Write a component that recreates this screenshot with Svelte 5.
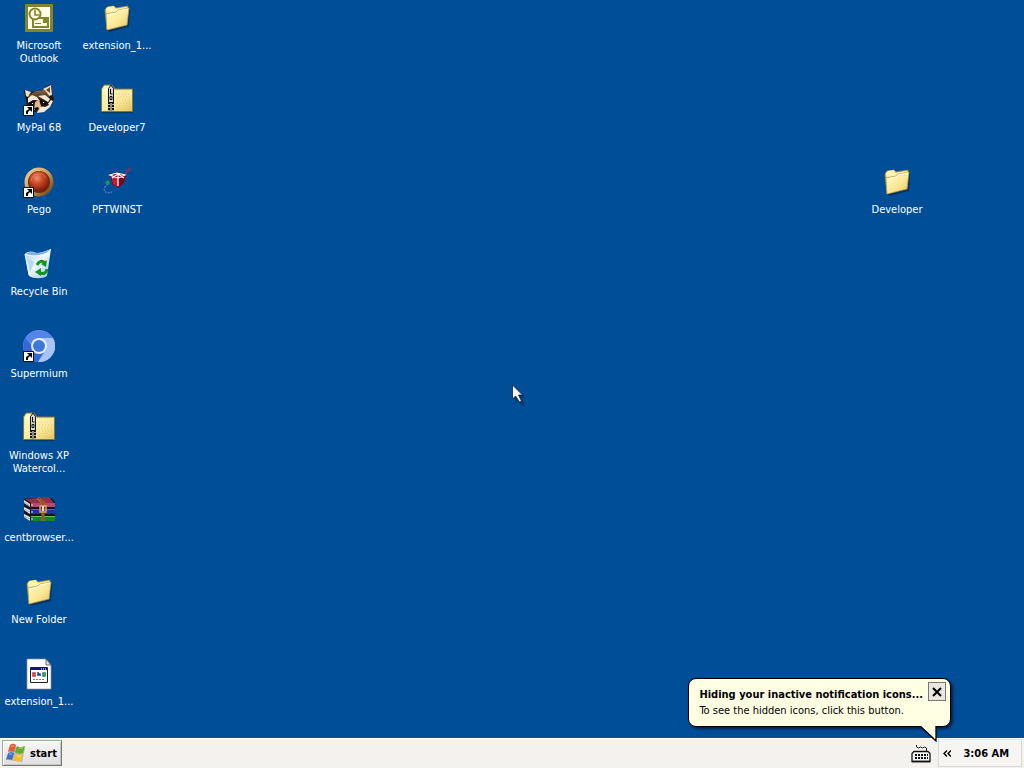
<script>
  const shortcuts = [
    { name: 'Microsoft Outlook', icon: 'outlook', col: 1, row: 1 },
    { name: 'MyPal 68', icon: 'raccoon', col: 1, row: 2, link: true },
    { name: 'Pego', icon: 'pego', col: 1, row: 3, link: true },
    { name: 'Recycle Bin', icon: 'bin', col: 1, row: 4 },
    { name: 'Supermium', icon: 'chromium', col: 1, row: 5, link: true },
    { name: 'Windows XP Watercol...', icon: 'zip', col: 1, row: 6 },
    { name: 'centbrowser...', icon: 'rar', col: 1, row: 7 },
    { name: 'New Folder', icon: 'folder', col: 1, row: 8 },
    { name: 'extension_1...', icon: 'file', col: 1, row: 9 },
    { name: 'extension_1...', icon: 'folder', col: 2, row: 1 },
    { name: 'Developer7', icon: 'zip', col: 2, row: 2 },
    { name: 'PFTWINST', icon: 'installer', col: 2, row: 3 },
    { name: 'Developer', icon: 'folder', col: 12, row: 3 }
  ];
  let balloonOpen = $state(true);
</script>

<div class="screen">
  <svg class="defs" aria-hidden="true">
    <defs>
      <linearGradient id="fold" x1="0" y1="0" x2="1" y2="1"><stop offset="0" stop-color="#fffbc4"/><stop offset=".55" stop-color="#fbe898"/><stop offset="1" stop-color="#e8c45c"/></linearGradient>
      <radialGradient id="ball" cx=".4" cy=".35" r=".7"><stop offset="0" stop-color="#f09070"/><stop offset=".4" stop-color="#cc4c2c"/><stop offset="1" stop-color="#7c1505"/></radialGradient>
      <linearGradient id="ring" x1="0" y1="0" x2="1" y2="1"><stop offset="0" stop-color="#f2dba0"/><stop offset=".5" stop-color="#c99a55"/><stop offset="1" stop-color="#5a3210"/></linearGradient>
      <linearGradient id="glass" x1="0" y1="0" x2="1" y2="1"><stop offset="0" stop-color="#a9cdf2"/><stop offset=".5" stop-color="#f0f8ff"/><stop offset="1" stop-color="#8dbbe8"/></linearGradient>
      <linearGradient id="fur" x1="0" y1="0" x2="0" y2="1"><stop offset="0" stop-color="#8c6746"/><stop offset="1" stop-color="#33231a"/></linearGradient>
    </defs>
  </svg>

  <main class="desktop">
    {#each shortcuts as s}
      <button class="item" style:grid-column={s.col} style:grid-row={s.row}>
        <svg class="icon" viewBox="0 0 32 32" aria-hidden="true">
          {#if s.icon === 'outlook'}
            <path fill="#84842a" d="M2 2h28v28H2z"/>
            <path fill="#fffde8" d="M5 5h22v22H5z"/>
            <path fill="#fffde8" stroke="#84842a" stroke-width="2" d="M10 16h15v9H10z"/>
            <path fill="#84842a" d="M20 17h4v4h-4zM12 21h6v1h-6z"/>
            <circle cx="12" cy="12" r="5.500" fill="#fffde8" stroke="#84842a" stroke-width="2"/>
            <path fill="none" stroke="#84842a" stroke-width="1.600" d="M12 8v5h4"/>
          {:else if s.icon === 'raccoon'}
            <path fill="#24170f" d="M2 12 1 6l7 2 11-2 7-5 3 1v7l2 6-3 7-7 5-10 1-7-7z"/>
            <path fill="#f0dfc8" d="m20 5 8-4 1 10-3 1zM2 6l6 2-3 5-2-1z"/>
            <path fill="#6c4530" d="m23 6 4-3v6z"/>
            <path fill="url(#fur)" d="m6 11 7-4 9-1 5 7-7 3-7-3-7 2z"/>
            <path fill="#f6e8d5" d="m5 14 4-3 5 2 3 4-5-1-7 3zM15 12l7-1 5 4-2 3-5-3zM16 23l7-1 5-6 2 1-3 6-6 5-7 1z"/>
            <path fill="#1a110c" d="m5 19 5-3 4 1-2 5-5 2zM17 16l7 2 2 3-4 2-5-2z"/>
            <path fill="#dfb993" d="m12 18 4-2 2 6-2 5-5-1z"/>
            <path fill="#15100d" d="m11 24 4-1 1 2-3 3z"/>
            <path fill="#fff" d="M9 19h1v1H9zM20 18h1v1h-1z"/>
          {:else if s.icon === 'pego'}
            <circle cx="16" cy="16" r="14.500" fill="url(#ring)"/>
            <circle cx="16" cy="16" r="11" fill="#6d2610"/>
            <circle cx="16" cy="15" r="10" fill="url(#ball)"/>
            <path fill="none" stroke="#f1b198" stroke-width="1" opacity=".4" d="M8 15a8 8 0 0 1 15-3"/>
          {:else if s.icon === 'bin'}
            <path fill="url(#glass)" d="M2 6c3-3 7-3 11-1 5 0 10-2 15-4l-4 27c-4 3-13 3-18 0z"/>
            <path fill="#80b3e8" d="M3 6c4-3 7-2 11-1 6 0 10-3 14-4-2 6-20 8-25 5z"/>
            <path fill="none" stroke="#f5fbff" d="M2 6c7 4 22 2 26-5M2 6l4 21"/>
            <path fill="#b9d8f5" d="m4 10 7 4-4 11z"/>
            <path fill="none" stroke="#16941f" stroke-width="3" d="M14 17c2-4 5-5 8-2M24 21c-1 5-4 5-7 4"/>
            <path fill="#16941f" d="m24 12-1 7-5-3zM18 20v8l-6-4z"/>
          {:else if s.icon === 'chromium'}
            <circle cx="16" cy="16" r="16" fill="#5b8def"/>
            <path fill="#3668d4" d="M2.500 8A16 16 0 0 0 15 32l5-9-11-7z"/>
            <path fill="#a9c4fb" d="M16 8h14a16 16 0 0 1-15 24l8-12z"/>
            <path fill="#5586e7" d="M2.500 8A16 16 0 0 1 30 8H16l-7 8z"/>
            <circle cx="16" cy="16" r="8" fill="#e6f0ff"/>
            <circle cx="16" cy="16" r="6" fill="#3f78da"/>
          {:else if s.icon === 'zip'}
            <path fill="#16221c" opacity=".5" d="M1 28h31v1H2z"/>
            <path fill="#f5e99f" stroke="#84772e" d="M.5 27.500V5L3 1h8l3 4h17.500v22.500z"/>
            <path fill="url(#fold)" d="M2 7h29v20H2z"/>
            <path fill="#fffdd5" d="M2 5 4 2h6l2 3v2H2z"/>
            <path stroke="#e3cb82" stroke-dasharray="1 2" d="M15 10h15M16 13h14M15 16h15M16 19h14M15 22h15M16 25h14"/>
            <path fill="#b5b5a8" d="M7 19h6v8H7z"/>
            <path stroke="#171717" stroke-width="2" stroke-dasharray="2 1" d="M8 18v9M12 18v9"/>
            <path stroke="#666" d="M10 18v9"/>
            <path fill="#d5d5cf" stroke="#111" d="M7.500 4.500 10 1l2.500 3.500v14h-5z"/>
            <path fill="none" stroke="#111" d="M9.500 5v5h2M9 12.500h2v3H9z"/>
          {:else if s.icon === 'rar'}
            <path fill="#151522" d="m1 5 5-1h22l4 4v19H7l-6-5z"/>
            <path fill="#913047" d="m2 5 24-2 5 6H8z"/><path fill="#b34b70" d="M8 9h24v4H8z"/>
            <path fill="#2432a0" d="M8 15h24v5H8z"/><path fill="#5361d1" d="M8 15h24v1H8z"/>
            <path fill="#168332" d="M8 22h24v5H8z"/><path fill="#53c558" d="M8 22h24v1H8z"/>
            <path fill="#f5f5f5" d="m1 6 6 4v3L1 9zM1 13l6 3v4l-6-4zM1 20l6 3v4l-6-4z"/>
            <path stroke="#999" d="m1 8 6 4M1 15l6 3M1 22l6 3"/>
            <path stroke="#eadbea" d="M9 10v2M9 17v2M9 24v2"/>
            <path fill="none" stroke="#ad6c32" stroke-width="3" d="m15 4 5 5v18"/>
            <path fill="none" stroke="#302012" stroke-dasharray="1 1" d="m16 4 4 5v18"/>
            <path fill="none" stroke="#d3a34c" stroke-width="1.500" d="M17 12h6v6h-6z"/><path stroke="#fff" stroke-width="1.500" d="M20 12v5"/>
          {:else if s.icon === 'folder'}
            <g transform="translate(0 1)">
              <path fill="#0b2038" opacity=".6" d="m6 27 21-5V6l2 1-1 17-20 5z"/>
              <path fill="#edcf73" stroke="#a58b3b" stroke-width=".7" d="M4 7 6 4l7-1 2 2 12-2v4L6 27z"/>
              <path fill="#fff6b4" d="m5 6 2-2 6-1 1 3 12-2v3L6 10z"/>
              <path fill="url(#fold)" stroke="#b99a43" stroke-width=".7" d="m5 11 10-2 2-2 11-2-2 17-20 5z"/>
              <path fill="none" stroke="#fffde0" d="m6 12 9-2 2-2 10-2"/>
            </g>
          {:else if s.icon === 'file'}
            <path fill="#fff" stroke="#8a9298" stroke-width=".7" d="M4 1h19l5 6v24H4z"/>
            <path fill="#dfe3e8" stroke="#49525b" stroke-width=".8" d="M23 1v6h5z"/>
            <path fill="#fff" stroke="#222" d="M7.500 9.500h17v15h-17z"/>
            <path fill="#0b168b" d="M8 10h16v2H8z"/><path stroke="#fff" stroke-dasharray="1 1" d="M18 11h5"/>
            <path fill="none" stroke="#cd2a35" stroke-width="1.500" d="M10 15h2v3h-2z"/>
            <path fill="none" stroke="#183da8" stroke-width="1.500" d="M15 14v4M15 16h2v2"/>
            <path fill="none" stroke="#188656" stroke-width="1.500" d="M20 18v-3h2v3z"/>
            <path stroke="#777" stroke-dasharray="2 1" d="M10 21.500h12"/>
          {:else}
            <path fill="none" stroke="#833063" stroke-width="1.500" stroke-dasharray="2 1" d="m24 8 2-5h5M25 7l6-4"/>
            <path fill="none" stroke="#6170bf" stroke-width="1.500" stroke-dasharray="2 1" d="M7 18c-7 5-3 11 4 8"/>
            <path fill="#159852" d="m4 16 3-2 2 2-1 3-3-1z"/>
            <path fill="#79091e" d="m9 9 8-3 8 3-2 8-6 5-6-4z"/><path fill="#c51c31" d="m10 10 7 3v8l-5-3z"/>
            <path fill="none" stroke="#fff" stroke-width="1.200" d="m9 9 7-2 8 2-7 3zM17 7v13M11 12l6-4 6 4"/>
          {/if}
          {#if s.link}
            <path fill="#fff" stroke="#111" d="M.5 21.500h10v10H.5z"/>
            <path fill="#000" d="M4 23h5v5l-2-2-2 2v2H3v-3l3-2z"/>
          {/if}
        </svg>
        <span class="label">{s.name}</span>
      </button>
    {/each}
  </main>

  <svg class="cursor" viewBox="0 0 14 22" aria-hidden="true">
    <path fill="#06254a" opacity=".55" d="m3 3 10 10-4 1 4 6-3 2-4-6-3 3z"/>
    <path fill="#f4f6fa" stroke="#17263b" stroke-width=".8" d="M.5 1v14l3-3 4 6 2-1-3-6h4z"/>
  </svg>

  <footer class="taskbar">
    <button class="start">
      <svg viewBox="0 0 20 20" aria-hidden="true">
        <path fill="#777" opacity=".45" d="m4 3 15 2-3 14-14-2z"/>
        <path fill="#e45b2f" d="M4 2c3-2 4-1 6 0L8 9C6 8 4 8 2 9z"/>
        <path fill="#68ac2e" d="M11 3c3 2 5 1 8 0l-2 7c-3 1-5 1-8-1z"/>
        <path fill="#3b6ed1" d="M2 10c2-1 4-1 6 0l-2 7c-2-1-4-1-6 0z"/>
        <path fill="#f4bf29" d="M9 11c3 1 5 1 8 0l-2 7c-3 1-5 0-8-1z"/>
        <path fill="none" stroke="#fff" opacity=".5" d="M5 3h3M13 5h4M3 11h3M11 13h4"/>
      </svg>
      <span>start</span>
    </button>
    <button class="keyboard" aria-label="Input language">
      <svg viewBox="0 0 20 18" aria-hidden="true">
        <path fill="none" stroke="#222" d="M5.500 0v2l2 1 2-1 2 1 2-1 2 1v3"/>
        <path fill="#f8f8f8" stroke="#111" stroke-width="1.300" d="m3 6.500h14l2 2v8H1v-8z"/>
        <path stroke="#111" stroke-width="2" stroke-dasharray="2 1" d="M4 10h13M4 13h13"/>
        <path stroke="#111" stroke-width="1.500" d="M1 16.500h18"/>
      </svg>
    </button>
    <div class="tray">
      <button class="expand" aria-label="Show hidden icons">
        <svg viewBox="0 0 8 7" aria-hidden="true"><path fill="none" stroke="#000" stroke-width="1.400" d="m4 .5-3 3 3 3M8 .5l-3 3 3 3"/></svg>
      </button>
      <time>3:06 AM</time>
    </div>
    {#if balloonOpen}
      <section class="balloon">
        <div class="message">
          <h2>Hiding your inactive notification icons...</h2>
          <p>To see the hidden icons, click this button.</p>
        </div>
        <button class="close" aria-label="Close" onclick={() => (balloonOpen = false)}>
          <svg viewBox="0 0 10 10" aria-hidden="true"><path stroke="#000" stroke-width="2" d="m1 1 8 8M9 1 1 9"/></svg>
        </button>
        <svg class="tail" viewBox="0 0 18 16" aria-hidden="true"><path fill="#ffffe4" d="M1 0h15v14z"/><path fill="none" stroke="#000" stroke-width="1.300" d="m1 1 15 14V0"/></svg>
      </section>
    {/if}
  </footer>
</div>

<style>
  :global(body) { margin: 0; }
  .screen {
    position: relative;
    display: flex;
    flex-direction: column;
    min-height: 100vh;
    background: #004e98;
    overflow: hidden;
    font: 11px/13px Tahoma, "DejaVu Sans Condensed", "DejaVu Sans", sans-serif;
  }
  button { font: inherit; color: inherit; padding: 0; border: 0; background: none; }
  svg { display: block; flex: none; }
  .defs { position: absolute; width: 0; height: 0; }
  .desktop {
    flex: 1;
    display: grid;
    grid-template-columns: repeat(auto-fill, 76px);
    grid-template-rows: repeat(9, 82px);
    column-gap: 2px;
    padding-left: 1px;
  }
  .item {
    display: flex;
    flex-direction: column;
    align-items: center;
    gap: 5px;
    padding-top: 2px;
    color: #fff;
  }
  .icon { width: 32px; height: 32px; }
  .label { max-width: 76px; text-align: center; }
  .cursor { position: absolute; left: 50%; top: 50%; width: 14px; height: 22px; }
  .taskbar {
    position: relative;
    display: flex;
    align-items: stretch;
    box-sizing: border-box;
    height: 30px;
    border-top: 1px solid #fff;
    background: #f3f2ee;
  }
  .start {
    display: flex;
    align-items: center;
    gap: 4px;
    margin: 1px 0 2px 2px;
    padding: 0 4px 0 3px;
    border: 1px solid;
    border-color: #a5a5a5 #777 #777 #a5a5a5;
    box-shadow: inset 1px 1px #fff, inset -1px -1px #c5c5c5;
    background: linear-gradient(#f7f7f5, #dedede);
    font-weight: bold;
  }
  .start svg { width: 20px; height: 20px; }
  .keyboard { margin-left: auto; padding: 0 7px 0 6px; }
  .keyboard svg { width: 20px; height: 18px; }
  .tray {
    display: flex;
    align-items: center;
    gap: 12px;
    margin: 0 2px 1px 0;
    padding: 0 12px 0 4px;
    border: 1px solid #d8d8d4;
    border-top-color: #eceadf;
    background: #f6f5f2;
    font-weight: bold;
  }
  .expand svg { width: 8px; height: 7px; }
  .balloon {
    position: absolute;
    right: 73px;
    bottom: 41px;
    display: flex;
    align-items: flex-start;
    gap: 5px;
    box-sizing: border-box;
    padding: 3px 4px 7px 10px;
    border: 1px solid #000;
    border-radius: 8px;
    background: #ffffe4;
    box-shadow: 2px 2px 3px #001e4a;
  }
  .message { padding-top: 5px; white-space: nowrap; }
  h2, p { margin: 0; font-size: 11px; line-height: 16px; }
  .close {
    display: grid;
    place-items: center;
    width: 18px;
    height: 19px;
    border: 1px solid #777;
    background: #e8e8e1;
  }
  .close svg { width: 10px; height: 10px; }
  .tail { position: absolute; right: 12px; top: 100%; width: 18px; height: 16px; }
</style>
